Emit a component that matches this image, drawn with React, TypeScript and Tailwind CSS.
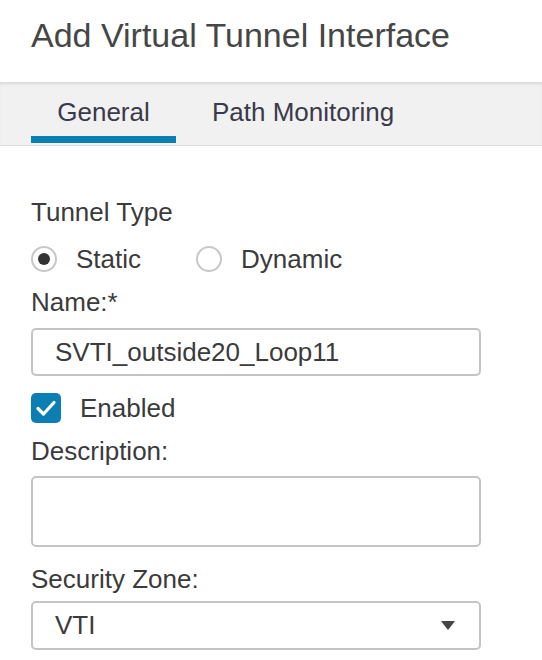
import React from "react";

export default function App() {
  return (
    <div className="w-[542px] h-[660px] bg-white overflow-hidden text-[#3b3b3b] font-['Liberation_Sans',Arial,sans-serif]">
      <div className="h-[82px] flex items-center pl-[31px] pb-[12px]">
        <h1 className="text-[34px] text-[#464646] leading-none">Add Virtual Tunnel Interface</h1>
      </div>
      <div className="h-[64px] bg-[#f1f1f1] border-b border-[#dcdcdc] shadow-[inset_0_3px_3px_-1px_rgba(0,0,0,0.10)] flex pl-[31px]">
        <div className="relative w-[145px] flex items-center justify-center text-[26px] text-[#3a3a4a] pb-[3px]">
          General
          <div className="absolute left-0 right-0 bottom-[2px] h-[7px] bg-[#0b7fb3]" />
        </div>
        <div className="flex items-center pl-[36px] text-[26px] text-[#3a3a4a] pb-[3px]">Path Monitoring</div>
      </div>

      <div className="pl-[31px] pr-[61px] pt-[50px] flex flex-col">
        <div className="text-[26px] leading-[32px] h-[32px]">Tunnel Type</div>
        <div className="flex items-center h-[48px] mt-[7px]">
          <div className="w-[26px] h-[26px] rounded-full border-[2px] border-[#c8c8c8] flex items-center justify-center">
            <div className="w-[12px] h-[12px] rounded-full bg-[#333]" />
          </div>
          <span className="ml-[19px] text-[26px]">Static</span>
          <div className="ml-[55px] w-[26px] h-[26px] rounded-full border-[2px] border-[#c8c8c8]" />
          <span className="ml-[19px] text-[26px]">Dynamic</span>
        </div>
        <div className="text-[26px] leading-[32px] h-[32px] mt-[3px]">Name:*</div>
        <div className="mt-[10px] h-[48px] rounded-[5px] border-[2px] border-[#c4c4c4] flex items-center pl-[22px] text-[26px]">
          SVTI_outside20_Loop11
        </div>
        <div className="flex items-center mt-[17px] h-[30px]">
          <div className="w-[30px] h-[30px] rounded-[5px] bg-[#0b7fb3] flex items-center justify-center">
            <svg width="24" height="24" viewBox="0 0 24 24">
              <path d="M4 12.5 L9.5 18 L20 6.5" fill="none" stroke="white" strokeWidth="3.2" strokeLinecap="round" strokeLinejoin="round" />
            </svg>
          </div>
          <span className="ml-[19px] text-[26px]">Enabled</span>
        </div>
        <div className="text-[26px] leading-[32px] h-[32px] mt-[12px]">Description:</div>
        <div className="mt-[9px] h-[71px] rounded-[5px] border-[2px] border-[#c4c4c4]" />
        <div className="text-[26px] leading-[32px] h-[32px] mt-[16px]">Security Zone:</div>
        <div className="mt-[6px] h-[49px] rounded-[5px] border-[2px] border-[#c4c4c4] flex items-center pl-[22px] pr-[24px] text-[26px]">
          <span className="flex-1">VTI</span>
          <svg width="14" height="10" viewBox="0 0 14 10">
            <path d="M0 0 L14 0 L7 9 Z" fill="#444" />
          </svg>
        </div>
      </div>
    </div>
  );
}
